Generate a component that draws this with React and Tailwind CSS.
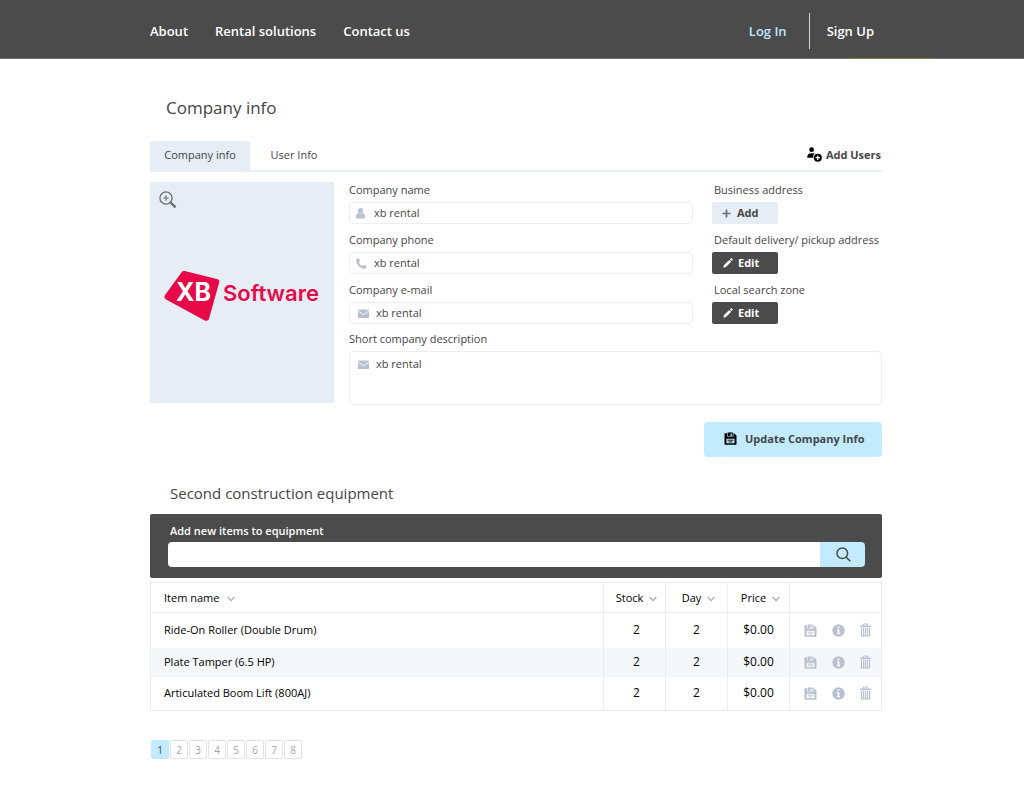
import React from "react";

const navLinks = ["About", "Rental solutions", "Contact us"];

const columns = ["Item name", "Stock", "Day", "Price"];

const items = [
  { name: "Ride-On Roller (Double Drum)", stock: 2, day: 2, price: "$0.00" },
  { name: "Plate Tamper (6.5 HP)", stock: 2, day: 2, price: "$0.00" },
  { name: "Articulated Boom Lift (800AJ)", stock: 2, day: 2, price: "$0.00" },
];

const pages = [1, 2, 3, 4, 5, 6, 7, 8];

function AddUserIcon() {
  return (
    <svg viewBox="0 0 15 15" className="h-[15px] w-[15px]" aria-hidden="true">
      <circle cx="4.6" cy="2.7" r="2.4" fill="#000" />
      <path d="M0.2 10.8C0.2 7.9 1.6 6.3 3.9 6.3H6.6C7 6.3 7.4 6.4 7.7 6.5C6.4 7.5 6 9 6.2 10.8Z" fill="#000" />
      <circle cx="10.8" cy="10.7" r="4" fill="#000" />
      <path d="M10.8 8.5V12.9M8.6 10.7H13" stroke="#fff" strokeWidth="1.3" />
    </svg>
  );
}

function ZoomInIcon() {
  return (
    <svg viewBox="0 0 18 18" className="h-[18px] w-[18px]" fill="none" aria-hidden="true">
      <circle cx="7" cy="7" r="6.1" stroke="#6b6e76" strokeWidth="1.3" />
      <path d="M7 4.3V9.7M4.3 7H9.7" stroke="#6b6e76" strokeWidth="1.2" />
      <path d="M11.6 11.6L16.6 16.4" stroke="#6b6e76" strokeWidth="2.4" />
    </svg>
  );
}

function PersonIcon() {
  return (
    <svg viewBox="0 0 9 11" className="h-[11px] w-[9px]" fill="#b9c0d0" aria-hidden="true">
      <circle cx="4.5" cy="2.7" r="2.6" />
      <path d="M0 9.2C0 6.7 0.9 5.2 2.3 5C3.6 6.1 5.4 6.1 6.7 5C8.1 5.2 9 6.7 9 9.2C9 10.2 8.4 10.6 7.6 10.6H1.4C0.6 10.6 0 10.2 0 9.2Z" />
    </svg>
  );
}

function PhoneIcon() {
  return (
    <svg viewBox="0 0 11 11" className="h-[11px] w-[11px]" fill="#b9c0d0" aria-hidden="true">
      <path d="M0.2 2.2C0.3 1.1 1.1 0.4 2.3 0.3C2.8 0.3 4 2.6 4 3.1C4 3.7 2.9 4 2.9 4.5C2.9 5.1 5.1 7.7 6.2 7.9C6.8 8 7.2 7 7.8 7C8.3 7 10.8 8.1 10.8 8.6C10.7 9.9 9.8 10.8 8.4 10.8C4.5 10.8 0 6 0.2 2.2Z" />
    </svg>
  );
}

function MailIcon() {
  return (
    <svg viewBox="0 0 11 9" className="h-[9px] w-[11px]" aria-hidden="true">
      <rect y="0.5" width="11" height="8.4" rx="0.7" fill="#b9c0d0" />
      <path d="M0 1.9L4.4 5C5.1 5.5 5.9 5.5 6.6 5L11 1.9" fill="none" stroke="#fff" strokeWidth="0.9" />
    </svg>
  );
}

function PencilIcon() {
  return (
    <svg viewBox="0 0 10 10" className="h-[10px] w-[10px]" fill="#fff" aria-hidden="true">
      <path d="M0.3 9.7L1 7L6.3 1.9L8.2 3.7L2.9 9Z" />
      <path d="M6.9 1.3L7.7 0.5C8.1 0.2 8.5 0.2 8.8 0.5L9.5 1.2C9.8 1.5 9.8 1.9 9.5 2.3L8.7 3.1Z" />
    </svg>
  );
}

function PlusIcon() {
  return (
    <svg viewBox="0 0 9 9" className="h-[9px] w-[9px]" aria-hidden="true">
      <path d="M4.5 0.5V8.5M0.5 4.5H8.5" stroke="#6b6e76" strokeWidth="1.7" />
    </svg>
  );
}

function SaveIcon() {
  return (
    <svg viewBox="0 0 13 13" className="h-[13px] w-[13px]" aria-hidden="true">
      <path
        fill="currentColor"
        fillRule="evenodd"
        d="M0.5 1.2H3V4.6H9.5V1.2H10L12.500 3.400V12C12.500 12.400 12.200 12.700 11.800 12.700H1.200C0.800 12.700 0.500 12.400 0.500 12ZM2.500 6.800V11.200H10.500V6.800Z"
      />
      <path fill="currentColor" d="M3.600 0.500H8.800V3.900H7.800V1.700H6.500V3.900H3.600Z" />
      <path d="M3.600 8.200H9.400M4.600 9.900H8.400" stroke="currentColor" strokeWidth="0.900" />
    </svg>
  );
}

function InfoIcon() {
  return (
    <svg viewBox="0 0 13 13" className="h-[13px] w-[13px]" aria-hidden="true">
      <circle cx="6.5" cy="6.5" r="6.2" fill="currentColor" />
      <path d="M5.600 2.400H7.400V4.100H5.600ZM4.900 5.200H7.400V9.200H8.200V10.200H4.800V9.200H5.600V6.200H4.900Z" fill="#fff" />
    </svg>
  );
}

function TrashIcon() {
  return (
    <svg viewBox="0 0 11 14" className="h-[14px] w-[11px]" fill="none" stroke="currentColor" aria-hidden="true">
      <path d="M3.5 2.5V1H7.5V2.5" strokeWidth="1" />
      <path d="M0.3 3.2H10.7" strokeWidth="1.6" />
      <path d="M1.500 4.500V12.900H9.500V4.500" strokeWidth="1.300" />
      <path d="M3.600 4.600V12.500M5.500 4.600V12.500M7.400 4.600V12.500" strokeWidth="1.100" />
    </svg>
  );
}

function Chevron() {
  return (
    <svg viewBox="0 0 8 6" className="mt-0.5 h-[6px] w-[8px]" fill="none" aria-hidden="true">
      <path d="M0.700 1L4 4.600L7.300 1" stroke="#a9a9a9" strokeWidth="1.200" />
    </svg>
  );
}

function SearchIcon() {
  return (
    <svg viewBox="0 0 15 15" className="h-[15px] w-[15px]" fill="none" aria-hidden="true">
      <circle cx="6.3" cy="6.3" r="5.3" stroke="#4b4b4b" strokeWidth="1.5" />
      <path d="M10.200 10.200L14.300 14.300" stroke="#4b4b4b" strokeWidth="1.600" />
    </svg>
  );
}

function Logo() {
  return (
    <svg viewBox="0 0 160 54" className="h-[54px] w-[160px]" role="img" aria-label="XB Software">
      <path
        d="M22 6L54.300 13.800L44.200 49.800L5.500 28.800Z"
        fill="#e60a48"
        stroke="#e60a48"
        strokeWidth="6"
        strokeLinejoin="round"
      />
      <text x="14" y="32.500" fill="#fff" fontFamily="Inter, sans-serif" fontWeight="700" fontSize="25">
        XB
      </text>
      <text x="61" y="33" fill="#e60a48" fontFamily="Inter, sans-serif" fontWeight="600" fontSize="22">
        Software
      </text>
    </svg>
  );
}

function Field({ id, label, icon, wide = false }) {
  return (
    <div className="flex flex-col gap-1">
      <label htmlFor={id}>{label}</label>
      <div className="relative flex items-center">
        <span className={wide ? "pointer-events-none absolute left-[9px]" : "pointer-events-none absolute left-[7px]"}>{icon}</span>
        <input
          id={id}
          type="text"
          defaultValue="xb rental"
          className={
            wide
              ? "h-[22px] w-full rounded-sm border border-[#e9eff7] bg-white pb-0.5 pl-[26px]"
              : "h-[22px] w-full rounded-sm border border-[#e9eff7] bg-white pb-0.5 pl-6"
          }
        />
      </div>
    </div>
  );
}

function EditBlock({ label }) {
  return (
    <div className="flex flex-col items-start gap-1">
      <span className="pl-0.5 whitespace-nowrap">{label}</span>
      <button
        type="button"
        aria-label={`Edit ${label}`}
        className="flex h-[22px] w-[66px] items-center gap-[5px] rounded-xs bg-[#4b4b4b] pl-[11px] font-bold text-white"
      >
        <PencilIcon />
        Edit
      </button>
    </div>
  );
}

function CompanyForm() {
  return (
    <form className="pt-[10px]" onSubmit={(e) => e.preventDefault()}>
      <div className="flex gap-[15px]">
        <div className="relative flex h-[221px] w-[184px] shrink-0 items-center justify-center bg-[#e6edf5] pt-1">
          <button type="button" aria-label="Zoom in" className="absolute top-[9px] left-[9px]">
            <ZoomInIcon />
          </button>
          <Logo />
        </div>
        <div className="flex min-w-0 grow flex-col gap-[7px]">
          <div className="flex gap-[19px]">
            <div className="flex min-w-0 grow flex-col gap-2">
              <Field id="name" label="Company name" icon={<PersonIcon />} />
              <Field id="phone" label="Company phone" icon={<PhoneIcon />} />
              <Field id="email" label="Company e-mail" icon={<MailIcon />} wide />
            </div>
            <div className="flex w-[170px] shrink-0 flex-col gap-2">
              <div className="flex flex-col items-start gap-1">
                <span className="pl-0.5">Business address</span>
                <button
                  type="button"
                  className="flex h-[22px] w-[66px] items-center gap-1.5 rounded-xs bg-[#e6edf5] pl-[10px] font-bold"
                >
                  <PlusIcon />
                  Add
                </button>
              </div>
              <EditBlock label="Default delivery/ pickup address" />
              <EditBlock label="Local search zone" />
            </div>
          </div>
          <div className="flex flex-col gap-1">
            <label htmlFor="description">Short company description</label>
            <div className="relative flex">
              <span className="pointer-events-none absolute top-[9px] left-[9px]">
                <MailIcon />
              </span>
              <textarea
                id="description"
                defaultValue="xb rental"
                className="h-[54px] w-full resize-none rounded-sm border border-[#e9eff7] bg-white pt-1 pl-[26px]"
              />
            </div>
          </div>
        </div>
      </div>
      <div className="flex justify-end pt-[17px]">
        <button
          type="submit"
          className="flex h-[35px] w-[178px] items-center gap-2 rounded-sm bg-[#c2ebff] pb-0.5 pl-5 font-bold whitespace-nowrap"
        >
          <span className="text-black">
            <SaveIcon />
          </span>
          Update Company Info
        </button>
      </div>
    </form>
  );
}

function EquipmentTable() {
  return (
    <table className="mt-1 w-full table-fixed border-collapse text-[11px] leading-4 text-black">
      <colgroup>
        <col />
        <col className="w-[62px]" />
        <col className="w-[62px]" />
        <col className="w-[62px]" />
        <col className="w-[92px]" />
      </colgroup>
      <thead>
        <tr className="h-[30px]">
          {columns.map((c, i) => (
            <th key={c} className="border border-[#ececec] p-0 font-normal">
              <button
                type="button"
                className={i === 0 ? "flex items-center gap-2 pl-[13px]" : "flex w-full items-center justify-center gap-1.5 pl-1"}
              >
                {c}
                <Chevron />
              </button>
            </th>
          ))}
          <th className="border border-[#ececec] p-0" aria-label="Actions" />
        </tr>
      </thead>
      <tbody>
        {items.map((item) => (
          <tr key={item.name} className="first:h-[35px] last:h-[34px] even:h-[29px] even:bg-[#f4f8fb]">
            <td className="border-x border-[#ececec] p-0 pl-[13px]">{item.name}</td>
            <td className="border-x border-[#ececec] p-0 pl-1 text-center text-[12px]">{item.stock}</td>
            <td className="border-x border-[#ececec] p-0 text-center text-[12px]">{item.day}</td>
            <td className="border-x border-[#ececec] p-0 text-center text-[12px]">{item.price}</td>
            <td className="border-x border-[#ececec] p-0">
              <div className="flex items-center gap-[15px] pl-[14px] text-[#b9c0d0]">
                <button type="button" aria-label={`Save ${item.name}`}>
                  <SaveIcon />
                </button>
                <button type="button" aria-label={`About ${item.name}`}>
                  <InfoIcon />
                </button>
                <button type="button" aria-label={`Delete ${item.name}`}>
                  <TrashIcon />
                </button>
              </div>
            </td>
          </tr>
        ))}
      </tbody>
      <tfoot>
        <tr>
          <td colSpan={5} className="border-t border-[#ececec] p-0" />
        </tr>
      </tfoot>
    </table>
  );
}

export default function App() {
  return (
    <div className="min-h-screen bg-white font-['Open_Sans','Noto_Sans',sans-serif] text-[11px] leading-4 text-[#454545]">
      <header className="border-b border-[#6f6f6f] bg-[#4b4b4b] text-[13px] leading-5 font-semibold text-white">
        <div className="relative mx-auto flex h-[58px] max-w-[1024px] items-center justify-between pt-1 pr-[150px] pl-[150px]">
          <nav className="flex gap-[27px]">
            {navLinks.map((l) => (
              <a key={l} href="#">
                {l}
              </a>
            ))}
          </nav>
          <div className="flex items-center">
            <a href="#" className="pr-[22px] text-[#bfe6fa]">
              Log In
            </a>
            <span className="h-9 w-px bg-[#d9d9d9]" />
            <a href="#" className="pl-[17px]">
              Sign Up
            </a>
          </div>
          <span className="absolute right-[92px] -bottom-px h-px w-[82px] bg-[#857a48]" />
        </div>
      </header>

      <main className="mx-auto max-w-[1024px] pr-[142px] pl-[150px]">
        <h1 className="pt-[37px] pl-4 text-[17px] leading-6">Company info</h1>

        <div className="mt-[21px] flex items-end justify-between border-b-2 border-[#e9eff7]">
          <div className="flex">
            <button type="button" className="h-[29px] w-[100px] rounded-t-xs bg-[#e6edf5] pb-0.5">
              Company info
            </button>
            <button type="button" className="h-[29px] w-[88px] pb-0.5">
              User Info
            </button>
          </div>
          <button type="button" className="flex h-[29px] items-center gap-1 pr-px pb-0.5 font-bold">
            <AddUserIcon />
            Add Users
          </button>
        </div>

        <CompanyForm />

        <h2 className="pt-6 pl-5 text-[15px] leading-6">Second construction equipment</h2>
        <form
          className="mt-[9px] flex flex-col gap-[3px] rounded-xs bg-[#4b4b4b] pt-[9px] pr-[17px] pb-[11px] pl-[18px]"
          onSubmit={(e) => e.preventDefault()}
        >
          <label htmlFor="search" className="pl-0.5 font-semibold text-white">
            Add new items to equipment
          </label>
          <div className="flex h-[25px]">
            <input id="search" type="text" className="min-w-0 grow rounded-l-sm bg-white px-2" />
            <button
              type="submit"
              aria-label="Search"
              className="flex w-[45px] items-center justify-center rounded-r-sm bg-[#c2ebff] pl-0.5"
            >
              <SearchIcon />
            </button>
          </div>
        </form>

        <EquipmentTable />

        <nav aria-label="Pages" className="flex gap-px pt-[29px] pb-6 pl-px text-[10px]">
          {pages.map((p) => (
            <button
              key={p}
              type="button"
              className={
                p === 1
                  ? "h-[19px] w-[18px] rounded-xs bg-[#c2ebff]"
                  : "h-[19px] w-[18px] rounded-xs border border-[#e3e3e3] text-[#a3a3a3]"
              }
            >
              {p}
            </button>
          ))}
        </nav>
      </main>
    </div>
  );
}
